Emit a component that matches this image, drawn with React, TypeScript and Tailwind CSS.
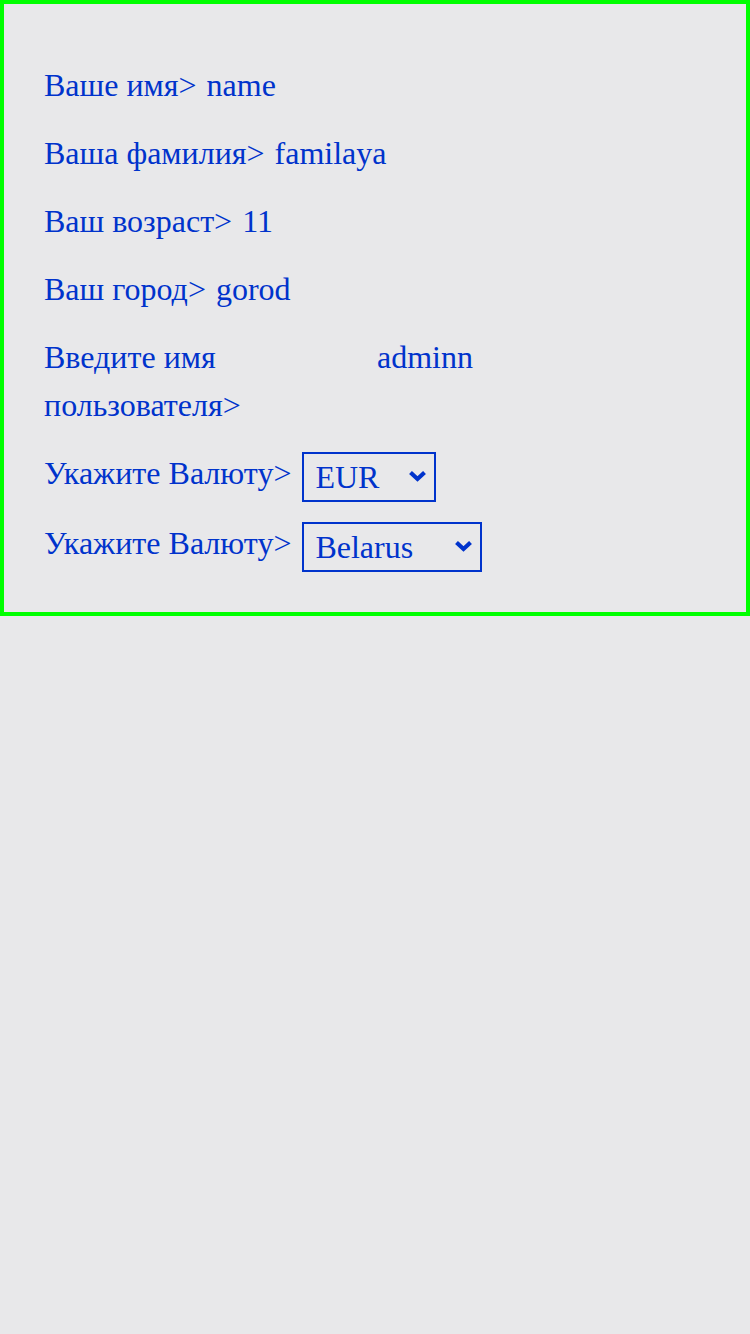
import { useState } from "react";

interface Field {
  label: string;
  value: string;
}

const fields: Field[] = [
  { label: "Ваше имя>", value: "name" },
  { label: "Ваша фамилия>", value: "familaya" },
  { label: "Ваш возраст>", value: "11" },
  { label: "Ваш город>", value: "gorod" },
];

function Chevron() {
  return (
    <svg
      viewBox="0 0 19 12"
      className="pointer-events-none absolute right-[9px] top-[18px] h-[12px] w-[19px]"
    >
      <path d="M2.5 2.5 L9.5 9 L16.5 2.5" fill="none" stroke="#0033cc" strokeWidth="4.2" />
    </svg>
  );
}

function Picker({
  options,
  value,
  onChange,
  width,
}: {
  options: string[];
  value: string;
  onChange: (v: string) => void;
  width: string;
}) {
  return (
    <div className={`relative mt-[3px] ${width}`}>
      <select
        value={value}
        onChange={(e) => onChange(e.target.value)}
        className="h-[50px] w-full appearance-none rounded-none border-2 border-[#0033cc] bg-transparent pl-[11px] text-[32px] leading-[46px] text-[#0033cc] outline-none"
      >
        {options.map((o) => (
          <option key={o} value={o}>
            {o}
          </option>
        ))}
      </select>
      <Chevron />
    </div>
  );
}

export default function App() {
  const [currency, setCurrency] = useState("EUR");
  const [country, setCountry] = useState("Belarus");

  return (
    <div className="min-h-[1334px] bg-[#e8e8ea] font-['Liberation_Serif',serif] text-[32px] leading-[48px] text-[#0033cc]">
      <div className="flex flex-col gap-5 border-4 border-[#00ff00] pb-10 pl-10 pt-[57px]">
        {fields.map((f) => (
          <div key={f.label} className="flex gap-2.5">
            <span>{f.label}</span>
            <span>{f.value}</span>
          </div>
        ))}

        <div className="flex gap-2.5">
          <span className="w-[323px]">
            Введите имя
            <br />
            пользователя&gt;
          </span>
          <span>adminn</span>
        </div>

        <div className="flex items-start gap-[11px]">
          <span>Укажите Валюту&gt;</span>
          <Picker options={["EUR", "USD", "BYN"]} value={currency} onChange={setCurrency} width="w-[134px]" />
        </div>

        <div className="-mt-[3px] flex items-start gap-[11px]">
          <span>Укажите Валюту&gt;</span>
          <Picker options={["Belarus", "Russia", "Poland"]} value={country} onChange={setCountry} width="w-[180px]" />
        </div>
      </div>
    </div>
  );
}
